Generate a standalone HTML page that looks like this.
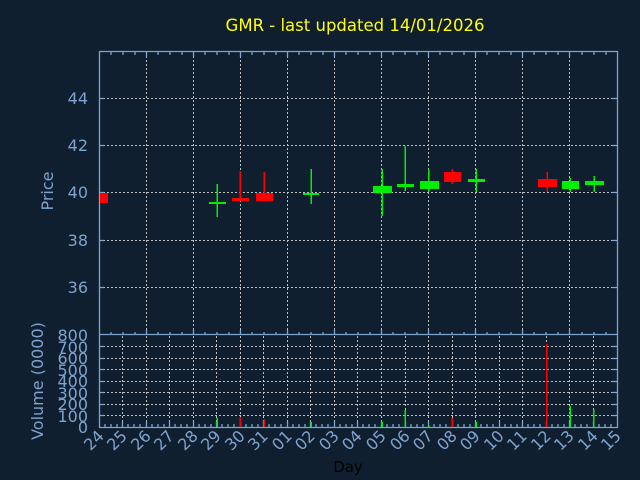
<!DOCTYPE html>
<html><head><meta charset="utf-8"><style>
html,body{margin:0;padding:0;background:#0f1f2f;}
svg{display:block;font-family:"DejaVu Sans","Liberation Sans",sans-serif;}
</style></head><body>
<svg width="640" height="480" viewBox="0 0 640 480" xmlns="http://www.w3.org/2000/svg">
<rect width="640" height="480" fill="#0f1f2f"/>
<text x="355" y="31" fill="#ffff00" font-size="16.5" text-anchor="middle">GMR - last updated 14/01/2026</text>
<!-- price grid -->
<g stroke="#c0c0c0" stroke-width="1" stroke-dasharray="2,2" fill="none">
<path d="M99 98.5H617M99 145.5H617M99 192.5H617M99 240.5H617M99 287.5H617"/>
<path d="M146.5 52V333M193.5 52V333M240.5 52V333M287.5 52V333M334.5 52V333M381.5 52V333M428.5 52V333M475.5 52V333M522.5 52V333M569.5 52V333"/>
<path d="M99 415.5H617M99 404.5H617M99 392.5H617M99 381.5H617M99 369.5H617M99 358.5H617M99 346.5H617"/>
<path d="M122.5 336V427M146.5 336V427M169.5 336V427M193.5 336V427M216.5 336V427M240.5 336V427M263.5 336V427M287.5 336V427M310.5 336V427M334.5 336V427M357.5 336V427M381.5 336V427M405.5 336V427M428.5 336V427M452.5 336V427M475.5 336V427M499.5 336V427M522.5 336V427M546.5 336V427M569.5 336V427M593.5 336V427"/>
</g>
<!-- axes -->
<g stroke="#7ea3cf" stroke-width="1.3" fill="none">
<path d="M99.5 51.5H617.5V427.5H99.5Z"/>
<path d="M99.5 334.5H617.5"/>
<path d="M99 98.5h5M99 145.5h5M99 192.5h5M99 240.5h5M99 287.5h5M617 98.5h-5M617 145.5h-5M617 192.5h-5M617 240.5h-5M617 287.5h-5"/>
<path d="M99 346.5h5M99 358.5h5M99 369.5h5M99 381.5h5M99 392.5h5M99 404.5h5M99 415.5h5M617 346.5h-5M617 358.5h-5M617 369.5h-5M617 381.5h-5M617 392.5h-5M617 404.5h-5M617 415.5h-5"/>
<path d="M111 52v3M123 52v3M135 52v3M158 52v3M170 52v3M182 52v3M205 52v3M217 52v3M229 52v3M252 52v3M264 52v3M276 52v3M299 52v3M311 52v3M323 52v3M346 52v3M358 52v3M370 52v3M393 52v3M405 52v3M417 52v3M440 52v3M452 52v3M464 52v3M487 52v3M499 52v3M511 52v3M534 52v3M546 52v3M558 52v3M582 52v3M594 52v3M606 52v3"/>
<path d="M146.5 52v5M193.5 52v5M240.5 52v5M287.5 52v5M334.5 52v5M381.5 52v5M428.5 52v5M475.5 52v5M522.5 52v5M569.5 52v5"/>
<path d="M111 335v-3M123 335v-3M135 335v-3M158 335v-3M170 335v-3M182 335v-3M205 335v-3M217 335v-3M229 335v-3M252 335v-3M264 335v-3M276 335v-3M299 335v-3M311 335v-3M323 335v-3M346 335v-3M358 335v-3M370 335v-3M393 335v-3M405 335v-3M417 335v-3M440 335v-3M452 335v-3M464 335v-3M487 335v-3M499 335v-3M511 335v-3M534 335v-3M546 335v-3M558 335v-3M582 335v-3M594 335v-3M606 335v-3"/>
<path d="M146.5 335v-5M193.5 335v-5M240.5 335v-5M287.5 335v-5M334.5 335v-5M381.5 335v-5M428.5 335v-5M475.5 335v-5M522.5 335v-5M569.5 335v-5"/>
<path d="M105 427v-3M111 427v-3M117 427v-3M128 427v-3M134 427v-3M140 427v-3M152 427v-3M158 427v-3M164 427v-3M175 427v-3M181 427v-3M187 427v-3M199 427v-3M205 427v-3M211 427v-3M222 427v-3M228 427v-3M234 427v-3M246 427v-3M252 427v-3M258 427v-3M269 427v-3M275 427v-3M281 427v-3M293 427v-3M299 427v-3M305 427v-3M316 427v-3M322 427v-3M328 427v-3M340 427v-3M346 427v-3M352 427v-3M363 427v-3M369 427v-3M375 427v-3M387 427v-3M393 427v-3M399 427v-3M411 427v-3M417 427v-3M423 427v-3M434 427v-3M440 427v-3M446 427v-3M458 427v-3M464 427v-3M470 427v-3M481 427v-3M487 427v-3M493 427v-3M505 427v-3M511 427v-3M517 427v-3M528 427v-3M534 427v-3M540 427v-3M552 427v-3M558 427v-3M564 427v-3M575 427v-3M581 427v-3M587 427v-3M599 427v-3M605 427v-3M611 427v-3"/>
<path d="M122.5 427v-6M146.5 427v-6M169.5 427v-6M193.5 427v-6M216.5 427v-6M240.5 427v-6M263.5 427v-6M287.5 427v-6M310.5 427v-6M334.5 427v-6M357.5 427v-6M381.5 427v-6M405.5 427v-6M428.5 427v-6M452.5 427v-6M475.5 427v-6M499.5 427v-6M522.5 427v-6M546.5 427v-6M569.5 427v-6M593.5 427v-6"/>
</g>
<g>
<rect x="100" y="193" width="8" height="10" fill="#ff0000"/>
<rect x="216.5" y="184" width="1.5" height="33" fill="#00ee00"/><rect x="209" y="202" width="17" height="2" fill="#00ee00"/>
<rect x="239.5" y="171" width="1.5" height="28" fill="#ff0000"/><rect x="232" y="198" width="17" height="3" fill="#ff0000"/>
<rect x="263.5" y="172" width="1.5" height="29" fill="#ff0000"/><rect x="256" y="193" width="17" height="8" fill="#ff0000"/>
<rect x="310.5" y="169" width="1.5" height="35" fill="#00ee00"/><rect x="303" y="193" width="16" height="2" fill="#00ee00"/>
<rect x="381.5" y="169" width="1.5" height="47" fill="#00ee00"/><rect x="373" y="186" width="19" height="7" fill="#00ee00"/>
<rect x="404.5" y="146" width="1.5" height="45" fill="#00ee00"/><rect x="397" y="184" width="17" height="3" fill="#00ee00"/>
<rect x="428" y="169" width="1.5" height="23" fill="#00ee00"/><rect x="420" y="181" width="19" height="8" fill="#00ee00"/>
<rect x="451.5" y="169" width="1.5" height="15" fill="#ff0000"/><rect x="444" y="172" width="17" height="10" fill="#ff0000"/>
<rect x="475.5" y="169" width="1.5" height="23" fill="#00ee00"/><rect x="468" y="179" width="17" height="3" fill="#00ee00"/>
<rect x="546.5" y="172" width="1.5" height="20" fill="#ff0000"/><rect x="538" y="179" width="19" height="8" fill="#ff0000"/>
<rect x="569.5" y="178" width="1.5" height="14" fill="#00ee00"/><rect x="562" y="181" width="17" height="8" fill="#00ee00"/>
<rect x="593.5" y="176" width="1.5" height="16" fill="#00ee00"/><rect x="585" y="181" width="19" height="4" fill="#00ee00"/>
</g>
<g>
<rect x="216.5" y="418" width="1.5" height="9" fill="#00ee00"/>
<rect x="239.5" y="417" width="1.5" height="10" fill="#ff0000"/>
<rect x="263.5" y="419" width="1.5" height="8" fill="#ff0000"/>
<rect x="310.5" y="422" width="1.5" height="5" fill="#00ee00"/>
<rect x="381.5" y="422" width="1.5" height="5" fill="#00ee00"/>
<rect x="404.5" y="410" width="1.5" height="17" fill="#00ee00"/>
<rect x="428" y="425" width="1.5" height="2" fill="#00ee00"/>
<rect x="451.5" y="418" width="1.5" height="9" fill="#ff0000"/>
<rect x="475.5" y="422" width="1.5" height="5" fill="#00ee00"/>
<rect x="546" y="344" width="1.5" height="83" fill="#ff0000"/>
<rect x="569.5" y="406" width="1.5" height="21" fill="#00ee00"/>
<rect x="593" y="409" width="1.5" height="18" fill="#00ee00"/>
</g>
<g fill="#7ea3cf" font-size="16" text-anchor="end">
<text x="88" y="104">44</text><text x="88" y="151">42</text><text x="88" y="198">40</text><text x="88" y="246">38</text><text x="88" y="293">36</text>
<text x="88" y="341">800</text><text x="88" y="353">700</text><text x="88" y="364">600</text><text x="88" y="376">500</text><text x="88" y="387">400</text><text x="88" y="399">300</text><text x="88" y="410">200</text><text x="88" y="422">100</text><text x="88" y="433">0</text>
</g>
<text transform="translate(53,191) rotate(-90)" fill="#7ea3cf" font-size="16" text-anchor="middle">Price</text>
<text transform="translate(43,381) rotate(-90)" fill="#7ea3cf" font-size="16" text-anchor="middle">Volume (0000)</text>
<text x="348" y="472" fill="#000" font-size="15" text-anchor="middle">Day</text>
<g fill="#7ea3cf" font-size="16" text-anchor="end">
<text transform="translate(105,437) rotate(-45)">24</text>
<text transform="translate(128,437) rotate(-45)">25</text>
<text transform="translate(152,437) rotate(-45)">26</text>
<text transform="translate(175,437) rotate(-45)">27</text>
<text transform="translate(199,437) rotate(-45)">28</text>
<text transform="translate(222,437) rotate(-45)">29</text>
<text transform="translate(246,437) rotate(-45)">30</text>
<text transform="translate(269,437) rotate(-45)">31</text>
<text transform="translate(293,437) rotate(-45)">01</text>
<text transform="translate(316,437) rotate(-45)">02</text>
<text transform="translate(340,437) rotate(-45)">03</text>
<text transform="translate(363,437) rotate(-45)">04</text>
<text transform="translate(387,437) rotate(-45)">05</text>
<text transform="translate(411,437) rotate(-45)">06</text>
<text transform="translate(434,437) rotate(-45)">07</text>
<text transform="translate(458,437) rotate(-45)">08</text>
<text transform="translate(481,437) rotate(-45)">09</text>
<text transform="translate(505,437) rotate(-45)">10</text>
<text transform="translate(528,437) rotate(-45)">11</text>
<text transform="translate(552,437) rotate(-45)">12</text>
<text transform="translate(575,437) rotate(-45)">13</text>
<text transform="translate(599,437) rotate(-45)">14</text>
<text transform="translate(622,437) rotate(-45)">15</text>
</g>
</svg>
</body></html>
